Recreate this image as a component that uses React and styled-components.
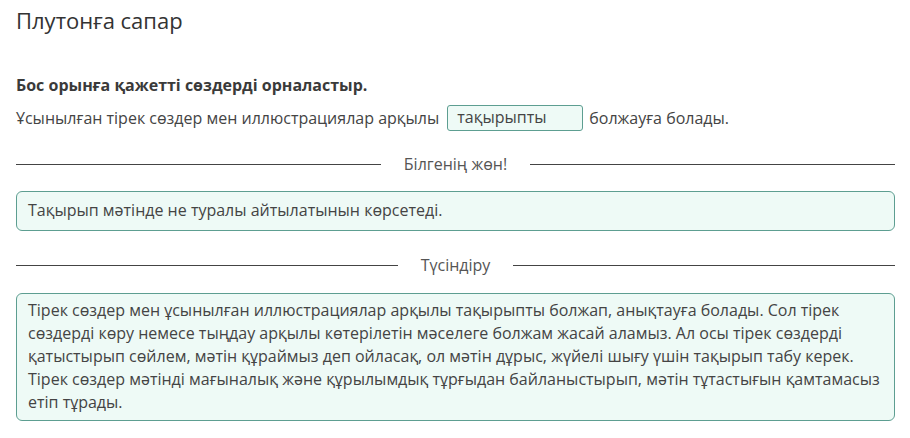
import React from "react";
import styled, { createGlobalStyle } from "styled-components";

const GlobalStyle = createGlobalStyle`
  body {
    margin: 0;
    background: #ffffff;
    font-family: "Open Sans", "Noto Sans", sans-serif;
    color: #3a3a3a;
  }
`;

const Page = styled.div`
  width: 910px;
  padding: 5px 15px 0 16px;
  box-sizing: border-box;
`;

const Title = styled.h1`
  margin: 0;
  font-size: 22px;
  font-weight: 400;
  line-height: 30px;
  color: #333;
`;

const Instruction = styled.div`
  margin-top: 39px;
  font-size: 16px;
  font-weight: 700;
  line-height: 22px;
  color: #3a3a3a;
`;

const Sentence = styled.div`
  margin-top: 9px;
  display: flex;
  align-items: center;
  gap: 10px;
  font-size: 16px;
  line-height: 26px;
  color: #444;
`;

const Blank = styled.span`
  display: inline-block;
  width: 136px;
  height: 26px;
  box-sizing: border-box;
  padding: 0 9px;
  border: 1px solid #5d9e91;
  border-radius: 3px;
  background: #eefaf6;
  line-height: 22px;
  color: #444;
  margin-left: -2px;
  margin-right: -4px;
`;

const Divider = styled.div`
  display: flex;
  align-items: center;
  gap: 23px;
  margin-top: ${(p) => p.$top}px;
  font-size: 16px;
  color: #555;
  white-space: nowrap;
  &::before,
  &::after {
    content: "";
    flex: 1;
    height: 1px;
    background: #444;
  }
`;

const Note = styled.div`
  margin-top: ${(p) => p.$top}px;
  border: 1px solid #5d9e91;
  border-radius: 6px;
  background: #eefaf6;
  padding: ${(p) => p.$pad};
  font-size: 16px;
  line-height: 23px;
  color: #444;
`;

const Line = styled.span`
  display: block;
  white-space: nowrap;
`;

const explanation = [
  "Тірек сөздер мен ұсынылған иллюстрациялар арқылы тақырыпты болжап, анықтауға болады. Сол тірек",
  "сөздерді көру немесе тыңдау арқылы көтерілетін мәселеге болжам жасай аламыз. Ал осы тірек сөздерді",
  "қатыстырып сөйлем, мәтін құраймыз деп ойласақ, ол мәтін дұрыс, жүйелі шығу үшін тақырып табу керек.",
  "Тірек сөздер мәтінді мағыналық және құрылымдық тұрғыдан байланыстырып, мәтін тұтастығын қамтамасыз",
  "етіп тұрады.",
];

export default function App() {
  return (
    <Page>
      <GlobalStyle />
      <Title>Плутонға сапар</Title>
      <Instruction>Бос орынға қажетті сөздерді орналастыр.</Instruction>
      <Sentence>
        <span>Ұсынылған тірек сөздер мен иллюстрациялар арқылы</span>
        <Blank>тақырыпты</Blank>
        <span>болжауға болады.</span>
      </Sentence>
      <Divider $top={22}>Білгенің жөн!</Divider>
      <Note $top={16} $pad="7px 11px 8px">
        Тақырып мәтінде не туралы айтылатынын көрсетеді.
      </Note>
      <Divider $top={23}>Түсіндіру</Divider>
      <Note $top={17} $pad="5px 4px 6px 11px">
        {explanation.map((line) => (
          <Line key={line}>{line}</Line>
        ))}
      </Note>
    </Page>
  );
}
